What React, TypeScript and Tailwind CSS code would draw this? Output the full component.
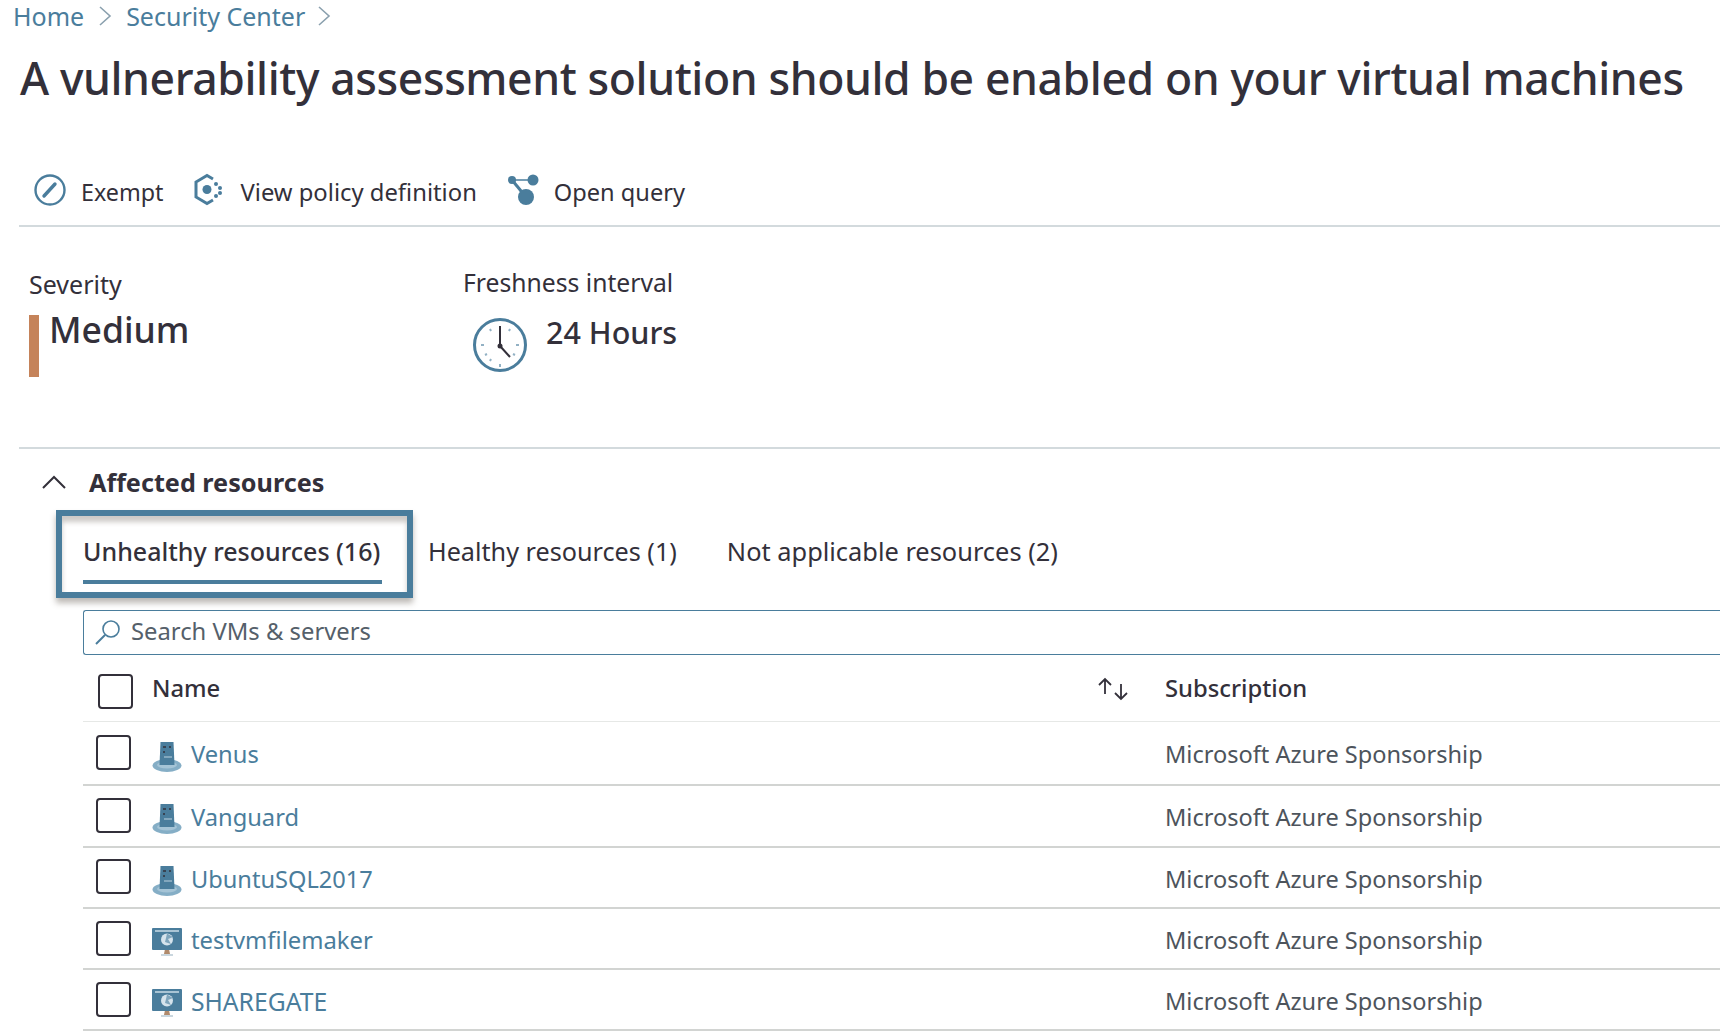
const INK = "#33303a";
const BLUE = "#4a7d9c";

const ROWS = [
  { name: "Venus", kind: "server", height: "h-[64px]", nameSize: "text-[23.7px]" },
  { name: "Vanguard", kind: "server", height: "h-[61.5px]", nameSize: "text-[23.7px]" },
  { name: "UbuntuSQL2017", kind: "server", height: "h-[61.5px]", nameSize: "text-[23.6px]" },
  { name: "testvmfilemaker", kind: "vm", height: "h-[61px]", nameSize: "text-[23.8px]" },
  { name: "SHAREGATE", kind: "vm", height: "h-[61px]", nameSize: "text-[24.7px]" },
];

function ExemptIcon() {
  return (
    <svg width="34" height="34" viewBox="0 0 34 34" fill="none" stroke={BLUE}>
      <circle cx="17" cy="17" r="14.5" strokeWidth="2.4" />
      <path d="M11 23 L22 11" strokeWidth="3.4" strokeLinecap="round" />
    </svg>
  );
}

function PolicyIcon() {
  return (
    <svg width="32" height="34" viewBox="0 0 32 34" fill="none">
      <path d="M20 6 L14 2.5 L3 9 V24 L14 30.5 L20 27" stroke={BLUE} strokeWidth="3" />
      <circle cx="14" cy="16.5" r="4.5" fill={BLUE} />
      <circle cx="23" cy="11" r="2" fill={BLUE} />
      <circle cx="27" cy="15" r="2" fill={BLUE} />
      <circle cx="27" cy="20" r="2" fill={BLUE} />
      <circle cx="23" cy="23" r="2" fill={BLUE} />
    </svg>
  );
}

function QueryIcon() {
  return (
    <svg width="34" height="34" viewBox="0 0 34 34" fill="none" stroke={BLUE}>
      <path d="M5 7 H26" strokeWidth="1.5" />
      <path d="M5 7 L19 24" strokeWidth="3" />
      <circle cx="5" cy="7" r="4" fill={BLUE} stroke="none" />
      <circle cx="26" cy="7" r="5.5" fill={BLUE} stroke="none" />
      <circle cx="19" cy="24" r="8" fill={BLUE} stroke="none" />
    </svg>
  );
}

function ClockIcon() {
  return (
    <svg width="56" height="56" viewBox="0 0 56 56" fill="none" stroke={BLUE}>
      <circle cx="28" cy="28" r="25.5" strokeWidth="3" />
      <path d="M28 9 V29 L38 40" stroke={INK} strokeWidth="2" />
      <circle cx="28" cy="29" r="2.5" fill={INK} stroke="none" />
      <g strokeWidth="2" opacity="0.6">
        <path d="M28 47 V50 M9 28 H12 M44 28 H47 M38 12 L37 14 M18 12 L19 14 M13 38 L15 37 M18 44 L19 42 M43 38 L41 37" />
      </g>
    </svg>
  );
}

function SearchIcon() {
  return (
    <svg width="28" height="28" viewBox="0 0 28 28" fill="none" stroke={BLUE} strokeWidth="1.6">
      <circle cx="17" cy="11" r="8" />
      <path d="M11 17 L2 26" strokeWidth="2" />
    </svg>
  );
}

function ServerIcon() {
  return (
    <svg width="30" height="30" viewBox="0 0 30 30">
      <ellipse cx="15" cy="23.5" rx="14.5" ry="6.5" fill="#85aec6" />
      <ellipse cx="15" cy="23" rx="10" ry="3.5" fill="#a5c4d6" />
      <path d="M8.5 0 H21.5 L22.5 23 H7.5 Z" fill={BLUE} />
      <path d="M11 5 H14 M17 5 H19 M11 10 H13" stroke={INK} strokeWidth="1.4" />
      <path d="M12 15 H20" stroke="#a9c4d4" strokeWidth="1.2" />
    </svg>
  );
}

function VmIcon() {
  return (
    <svg width="30" height="30" viewBox="0 0 30 30">
      <path d="M13 22 H17 L18 27 H12 Z" fill="#b08a6c" />
      <rect x="9" y="27" width="12" height="2" fill="#c9d6de" />
      <rect x="0" y="1" width="30" height="22" rx="1" fill={BLUE} />
      <rect x="3" y="3" width="24" height="2" fill="#a9c4d4" />
      <circle cx="15" cy="12.5" r="6" fill="#d5e3ec" />
      <path d="M15 6.5 L21 10 L16 12 L19 17 L13 15 L14 11 Z" fill="#7fa5bc" />
    </svg>
  );
}

function Checkbox({ className }: { className: string }) {
  return <span className={`block h-[35px] w-[35px] shrink-0 rounded-[4px] border-2 border-[#33303a] bg-white ${className}`} />;
}

export default function App() {
  return (
    <div
      className="h-[1036px] w-[1720px] overflow-hidden bg-white text-[#33303a]"
      style={{ fontFamily: '"Noto Sans", "Open Sans", sans-serif' }}
    >
      <nav className="flex h-[32px] items-center pl-[13px] text-[25px] leading-none text-[#4a7d9c]">
        <span>Home</span>
        <svg className="ml-[14px]" width="14" height="24" viewBox="0 0 14 24" fill="none" stroke="#8aa0ae" strokeWidth="1.6">
          <path d="M2 3 L12 12 L2 21" />
        </svg>
        <span className="ml-[14px]">Security Center</span>
        <svg className="ml-[12px]" width="14" height="24" viewBox="0 0 14 24" fill="none" stroke="#8aa0ae" strokeWidth="1.6">
          <path d="M2 3 L12 12 L2 21" />
        </svg>
      </nav>

      <h1 className="mt-[18px] whitespace-nowrap pl-[20px] text-[44.5px] font-medium leading-[56px] tracking-[-0.4px]">
        A vulnerability assessment solution should be enabled on your virtual machines
      </h1>

      <div className="mt-[69px] ml-[19px] flex h-[52px] items-start gap-[30px] border-b-2 border-[#d3dadd] pl-[14px] text-[23.6px] leading-[34px]">
        <div className="flex items-center gap-[14px]">
          <span className="-mt-[4px]"><ExemptIcon /></span>
          <span className="text-[23.3px]">Exempt</span>
        </div>
        <div className="flex items-center gap-[15px]">
          <span className="-mt-[4px]"><PolicyIcon /></span>
          <span className="text-[23.8px]">View policy definition</span>
        </div>
        <div className="flex items-center gap-[13px]">
          <span className="-mt-[4px]"><QueryIcon /></span>
          <span>Open query</span>
        </div>
      </div>

      <div className="ml-[19px] flex h-[222px] border-b-2 border-[#d3dadd] pl-[10px]">
        <div className="w-[434px] pt-[40px]">
          <p className="text-[25px] leading-[34px]">Severity</p>
          <div className="mt-[14px] flex gap-[10px]">
            <span className="block h-[62px] w-[10px] bg-[#c5835a]" />
            <span className="-mt-[1px] text-[35.5px] font-medium leading-[30px]">Medium</span>
          </div>
        </div>
        <div className="pt-[39px]">
          <p className="text-[24.7px] leading-[34px]">Freshness interval</p>
          <div className="mt-[17px] ml-[9px] flex gap-[18px]">
            <ClockIcon />
            <span className="-mt-[2px] text-[30.5px] font-medium leading-[34px]">24 Hours</span>
          </div>
        </div>
      </div>

      <div className="mt-[16px] flex items-center pl-[41px]">
        <svg width="26" height="16" viewBox="0 0 26 16" fill="none" stroke="#33303a" strokeWidth="2">
          <path d="M2 14 L13 3 L24 14" />
        </svg>
        <span className="ml-[22px] text-[25.2px] font-bold leading-[34px]">Affected resources</span>
      </div>

      <div className="mt-[11px] ml-[56px] flex items-center">
        <div className="h-[88px] w-[357px] border-[6px] border-[#4a7d9c] pl-[21px] pt-[18px] shadow-[0_5px_6px_rgba(90,80,70,0.4),inset_0_6px_5px_rgba(90,80,70,0.3)]">
          <p className="text-[25px] font-medium leading-[34px]">Unhealthy resources (16)</p>
          <span className="mt-[12px] block h-[4px] w-[299px] bg-[#4a7d9c]" />
        </div>
        <span className="-mt-[4px] ml-[15px] text-[25.2px]">Healthy resources (1)</span>
        <span className="-mt-[5px] ml-[50px] text-[25.4px]">Not applicable resources (2)</span>
      </div>

      <div className="mt-[12px] ml-[83px] flex h-[45px] items-center rounded-l-[3px] border border-r-0 border-[#4a7d9c] pb-[2px] pl-[10px] text-[23.8px] text-[#55606a]">
        <SearchIcon />
        <span className="ml-[9px]">Search VMs &amp; servers</span>
      </div>

      <div className="ml-[83px] flex h-[67px] items-center border-b border-[#e6e8e6] pl-[15px] text-[23.8px]">
        <Checkbox className="mt-[6px]" />
        <span className="mt-[2px] ml-[19px] w-[944px] font-medium">Name</span>
        <svg className="mt-[2px]" width="34" height="26" viewBox="0 0 34 26" fill="none" stroke="#33303a" strokeWidth="1.8">
          <path d="M9 18 V3 M3 9 L9 3 L15 9 M25 8 V23 M19 17 L25 23 L31 17" />
        </svg>
        <span className="mt-[2px] ml-[35px] font-medium">Subscription</span>
      </div>

      {ROWS.map((row) => (
        <div key={row.name} className={`ml-[83px] flex items-center border-b-2 border-[#d2d4d2] pl-[13px] pt-[4px] ${row.height}`}>
          <Checkbox className="-mt-[5px]" />
          <span className="mt-[3px] ml-[21px] w-[30px]">{row.kind === "server" ? <ServerIcon /> : <VmIcon />}</span>
          <span className={`ml-[9px] w-[974px] text-[#4a7d9c] ${row.nameSize}`}>{row.name}</span>
          <span className="text-[23.55px] text-[#4d545c]">Microsoft Azure Sponsorship</span>
        </div>
      ))}
    </div>
  );
}
